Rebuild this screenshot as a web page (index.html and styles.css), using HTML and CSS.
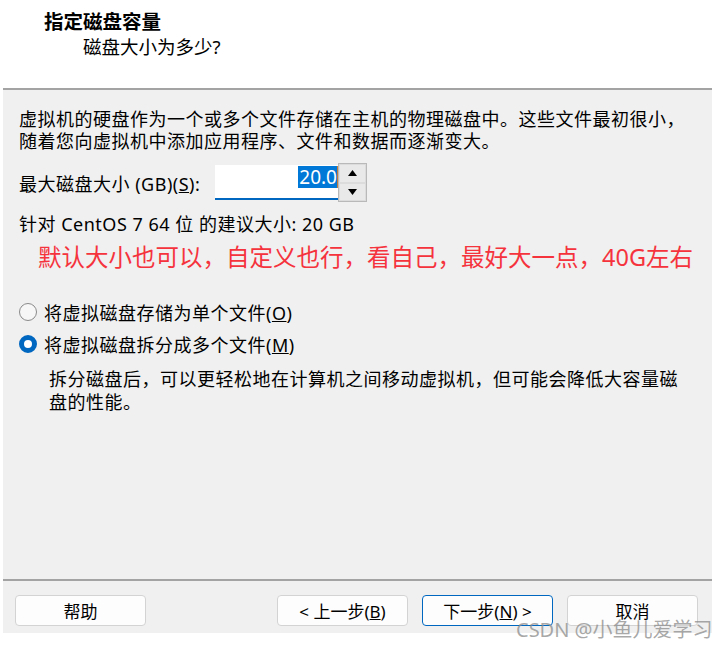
FILE: index.html
```html
<!DOCTYPE html>
<html lang="zh-CN">
<head>
<meta charset="utf-8">
<title>指定磁盘容量</title>
<link rel="stylesheet" href="styles.css">
</head>
<body>
<div class="dialog">
  <header class="head">
    <div class="title">指定磁盘容量</div>
    <div class="subtitle">磁盘大小为多少?</div>
  </header>
  <main class="panel">
    <div class="content">
      <p class="intro">虚拟机的硬盘作为一个或多个文件存储在主机的物理磁盘中。这些文件最初很小，<br>随着您向虚拟机中添加应用程序、文件和数据而逐渐变大。</p>
      <div class="size-row">
        <span class="size-label">最大磁盘大小 (GB)(<u>S</u>):</span>
        <div class="spin">
          <div class="spin-input"><span class="sel">20.0</span><span class="caret"></span></div>
          <div class="spin-btns">
            <div class="spin-btn"><svg width="9" height="6" viewBox="0 0 9 6"><polygon points="4.5,0 9,6 0,6" fill="#000"/></svg></div>
            <div class="spin-btn"><svg width="9" height="6" viewBox="0 0 9 6"><polygon points="0,0 9,0 4.5,6" fill="#000"/></svg></div>
          </div>
        </div>
      </div>
      <p class="rec">针对 CentOS 7 64 位 的建议大小: 20 GB</p>
      <p class="note">默认大小也可以，自定义也行，看自己，最好大一点，40G左右</p>
      <div class="radios">
        <div class="radio-row"><span class="radio"></span><span>将虚拟磁盘存储为单个文件(<u>O</u>)</span></div>
        <div class="radio-row second"><span class="radio checked"></span><span>将虚拟磁盘拆分成多个文件(<u>M</u>)</span></div>
        <p class="desc">拆分磁盘后，可以更轻松地在计算机之间移动虚拟机，但可能会降低大容量磁<br>盘的性能。</p>
      </div>
    </div>
    <footer class="footer">
      <button class="btn">帮助</button>
      <span class="spacer"></span>
      <button class="btn">&lt; 上一步(<u>B</u>)</button>
      <button class="btn default">下一步(<u>N</u>) &gt;</button>
      <button class="btn">取消</button>
    </footer>
  </main>
</div>
<div class="watermark">CSDN @小鱼儿爱学习</div>
</body>
</html>
```
FILE: styles.css
```css
html, body {
  margin: 0;
  padding: 0;
}
body {
  width: 720px;
  height: 648px;
  overflow: hidden;
  position: relative;
  background: #ffffff;
  color: #000000;
  font-family: "Noto Sans", "Noto Sans CJK SC", sans-serif;
}
.head {
  height: 88px;
  box-sizing: border-box;
  padding-top: 10px;
}
.title {
  margin-left: 44px;
  font-size: 19.5px;
  font-weight: bold;
  line-height: 24px;
}
.subtitle {
  margin-left: 83px;
  margin-top: 1px;
  font-size: 18.5px;
  line-height: 24px;
}
.panel {
  margin-left: 3px;
  width: 709px;
  height: 545px;
  box-sizing: border-box;
  background: #f0f0f0;
  border-top: 2px solid #a3a3a3;
  display: flex;
  flex-direction: column;
}
.content {
  flex: 1;
  padding: 18px 0 0 16px;
  font-size: 18px;
  letter-spacing: 0.5px;
}
.intro {
  margin: 0;
  line-height: 22px;
}
.size-row {
  display: flex;
  align-items: center;
  margin-top: 11px;
  height: 39px;
}
.size-label {
  width: 196px;
  flex: none;
}
.spin {
  display: flex;
  align-items: center;
}
.spin-input {
  width: 123px;
  height: 35px;
  box-sizing: border-box;
  background: #ffffff;
  border-bottom: 2px solid #0067c0;
  display: flex;
  justify-content: flex-end;
  align-items: flex-start;
  padding-top: 1px;
  font-size: 19px;
  letter-spacing: 0;
}
.sel {
  background: #0078d7;
  color: #ffffff;
  line-height: 22px;
  padding: 0 0 0 1px;
}
.caret {
  width: 1px;
  height: 22px;
  background: #c07a3a;
}
.spin-btns {
  width: 29px;
  height: 39px;
  box-sizing: border-box;
  border: 1px solid #b9b9b9;
  background: #ececec;
  display: flex;
  flex-direction: column;
}
.spin-btn {
  flex: 1;
  display: flex;
  align-items: center;
  justify-content: center;
  border: 1px solid #dcdcdc;
  background: #e9e9e9;
}
.rec {
  margin: 12px 0 0;
  line-height: 20px;
}
.note {
  margin: 8px 0 0 19px;
  font-size: 23.5px;
  line-height: 30px;
  letter-spacing: 0;
  color: #f5333d;
}
.radios {
  margin-top: 28px;
}
.radio-row {
  display: flex;
  align-items: center;
  height: 24px;
}
.radio-row.second {
  margin-top: 8px;
}
.radio {
  width: 18px;
  height: 18px;
  box-sizing: border-box;
  border: 1px solid #8a8a8a;
  border-radius: 50%;
  background: #f7f7f7;
  margin-right: 7px;
  flex: none;
}
.radio.checked {
  border: 5px solid #0067c0;
  background: #ffffff;
}
.desc {
  margin: 12px 0 0 30px;
  line-height: 23px;
}
.footer {
  display: flex;
  align-items: center;
  gap: 14px;
  border-top: 2px solid #a3a3a3;
  padding: 14px 14px 7px 12px;
}
.spacer {
  flex: 1;
}
.btn {
  width: 131px;
  height: 31px;
  box-sizing: border-box;
  border: 1px solid #d3d3d3;
  border-radius: 4px;
  background: #fdfdfd;
  font-family: inherit;
  font-size: 17px;
  color: #000000;
  padding: 0;
}
.btn.default {
  border-color: #0067c0;
}
.watermark {
  position: absolute;
  left: 516px;
  top: 617px;
  font-size: 20px;
  line-height: 26px;
  white-space: nowrap;
  color: rgba(140, 140, 140, 0.75);
  font-family: "Noto Sans", "Noto Sans CJK SC", sans-serif;
}
```
